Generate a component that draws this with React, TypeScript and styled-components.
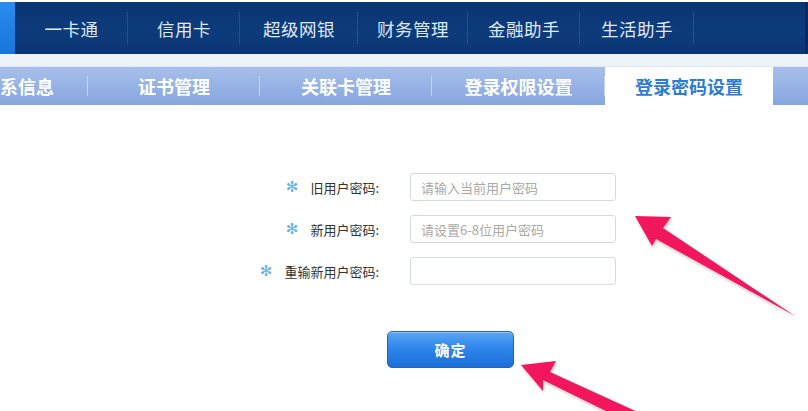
import styled, { createGlobalStyle } from "styled-components";

const GlobalStyle = createGlobalStyle`
  html, body {
    margin: 0;
    padding: 0;
    background: #ffffff;
  }
  body {
    font-family: "Microsoft YaHei", "Noto Sans CJK SC", "Noto Sans", sans-serif;
  }
`;

const Page = styled.div`
  position: relative;
  width: 808px;
  height: 411px;
  overflow: hidden;
  background: #ffffff;
`;

const TopNav = styled.nav`
  display: flex;
  height: 52px;
  margin-top: 2px;
  background: linear-gradient(#0b3573, #0d3b7b 60%, #0b3574);
  border-right: 3px solid #082a5c;
`;

const Accent = styled.div`
  width: 15px;
  background: linear-gradient(#2a8cf0, #1874dc);
`;

const NavItem = styled.div<{ $w: number }>`
  display: flex;
  align-items: center;
  justify-content: center;
  width: ${(p) => p.$w}px;
  height: 100%;
  color: #dfe8f6;
  font-size: 17.5px;
  letter-spacing: 0.5px;
  position: relative;

  &::after {
    content: "";
    position: absolute;
    right: 0;
    top: 10px;
    bottom: 10px;
    width: 1px;
    background: #23508f;
  }
`;

const Gap = styled.div`
  height: 12px;
  background: #eef3fa;
  border-bottom: 1px solid #dde6f3;
`;

const TabBar = styled.div`
  display: flex;
  height: 38px;
  background: linear-gradient(#a7bfea, #86a6df);
`;

const Tab = styled.div<{ $w: number; $active?: boolean; $shift?: number }>`
  flex: none;
  display: flex;
  align-items: center;
  justify-content: center;
  width: ${(p) => p.$w}px;
  margin-left: ${(p) => p.$shift ?? 0}px;
  font-size: 18px;
  font-weight: 700;
  color: ${(p) => (p.$active ? "#2b7dd4" : "#ffffff")};
  background: ${(p) => (p.$active ? "#ffffff" : "transparent")};
  position: relative;

  &::after {
    content: "";
    display: ${(p) => (p.$active ? "none" : "block")};
    position: absolute;
    right: 0;
    top: 9px;
    bottom: 9px;
    width: 1px;
    background: #c5d4ef;
  }
`;

const Form = styled.form`
  display: flex;
  flex-direction: column;
  gap: 14px;
  margin-top: 68px;
`;

const Row = styled.div`
  display: grid;
  grid-template-columns: 410px 206px;
  align-items: center;
`;

const Label = styled.label`
  display: flex;
  align-items: center;
  justify-content: flex-end;
  gap: 12px;
  padding-right: 31px;
  font-size: 13px;
  color: #333333;
`;

const Star = styled.span`
  font-family: "DejaVu Sans", sans-serif;
  font-size: 15px;
  color: #6aaee6;
`;

const Input = styled.input`
  box-sizing: border-box;
  width: 206px;
  height: 28px;
  padding: 0 10px;
  border: 1px solid #d5dbe3;
  border-radius: 3px;
  font-family: inherit;
  font-size: 13px;
  color: #333;
  outline: none;

  &::placeholder {
    color: #a9a9a9;
  }
`;

const Submit = styled.button`
  width: 127px;
  height: 37px;
  margin: 46px 0 0 387px;
  border: 1px solid #2562b5;
  border-radius: 5px;
  background: linear-gradient(#5aa6f2, #2f86ec 45%, #1a6ed9);
  box-shadow: inset 0 1px 0 rgba(255, 255, 255, 0.35);
  color: #ffffff;
  font-family: inherit;
  font-size: 15px;
  font-weight: 700;
  letter-spacing: 1px;
`;

const Overlay = styled.svg`
  position: absolute;
  inset: 0;
  pointer-events: none;
`;

const navItems = [
  { label: "一卡通", w: 113 },
  { label: "信用卡", w: 112 },
  { label: "超级网银", w: 118 },
  { label: "财务管理", w: 110 },
  { label: "金融助手", w: 112 },
  { label: "生活助手", w: 114 },
];

const tabs = [
  { label: "证书管理", w: 172 },
  { label: "关联卡管理", w: 172 },
  { label: "登录权限设置", w: 173 },
];

const fields = [
  { label: "旧用户密码:", placeholder: "请输入当前用户密码" },
  { label: "新用户密码:", placeholder: "请设置6-8位用户密码" },
  { label: "重输新用户密码:", placeholder: "" },
];

export default function App() {
  return (
    <Page>
      <GlobalStyle />
      <TopNav>
        <Accent />
        {navItems.map((n) => (
          <NavItem key={n.label} $w={n.w}>
            {n.label}
          </NavItem>
        ))}
      </TopNav>
      <Gap />
      <TabBar>
        <Tab $w={140} $shift={-52}>
          联系信息
        </Tab>
        {tabs.map((t) => (
          <Tab key={t.label} $w={t.w}>
            {t.label}
          </Tab>
        ))}
        <Tab $w={168} $active>
          登录密码设置
        </Tab>
      </TabBar>

      <Form onSubmit={(e) => e.preventDefault()}>
        {fields.map((f) => (
          <Row key={f.label}>
            <Label>
              <Star>✻</Star>
              {f.label}
            </Label>
            <Input type="password" placeholder={f.placeholder} />
          </Row>
        ))}
      </Form>
      <Submit type="button">确定</Submit>

      <Overlay width="808" height="411" viewBox="0 0 808 411">
        <defs>
          <filter id="soft" x="-10%" y="-10%" width="120%" height="120%">
            <feDropShadow dx="1" dy="2" stdDeviation="1.5" floodColor="#000" floodOpacity="0.25" />
          </filter>
        </defs>
        <polygon
          points="635,216 671,217 663,228 795,316 656,239 652,246"
          fill="#f2165b"
          filter="url(#soft)"
        />
        <polygon
          points="521,365 556,361 550,372 642,414 612,414 543,380 543,391"
          fill="#f2165b"
          filter="url(#soft)"
        />
      </Overlay>
    </Page>
  );
}
